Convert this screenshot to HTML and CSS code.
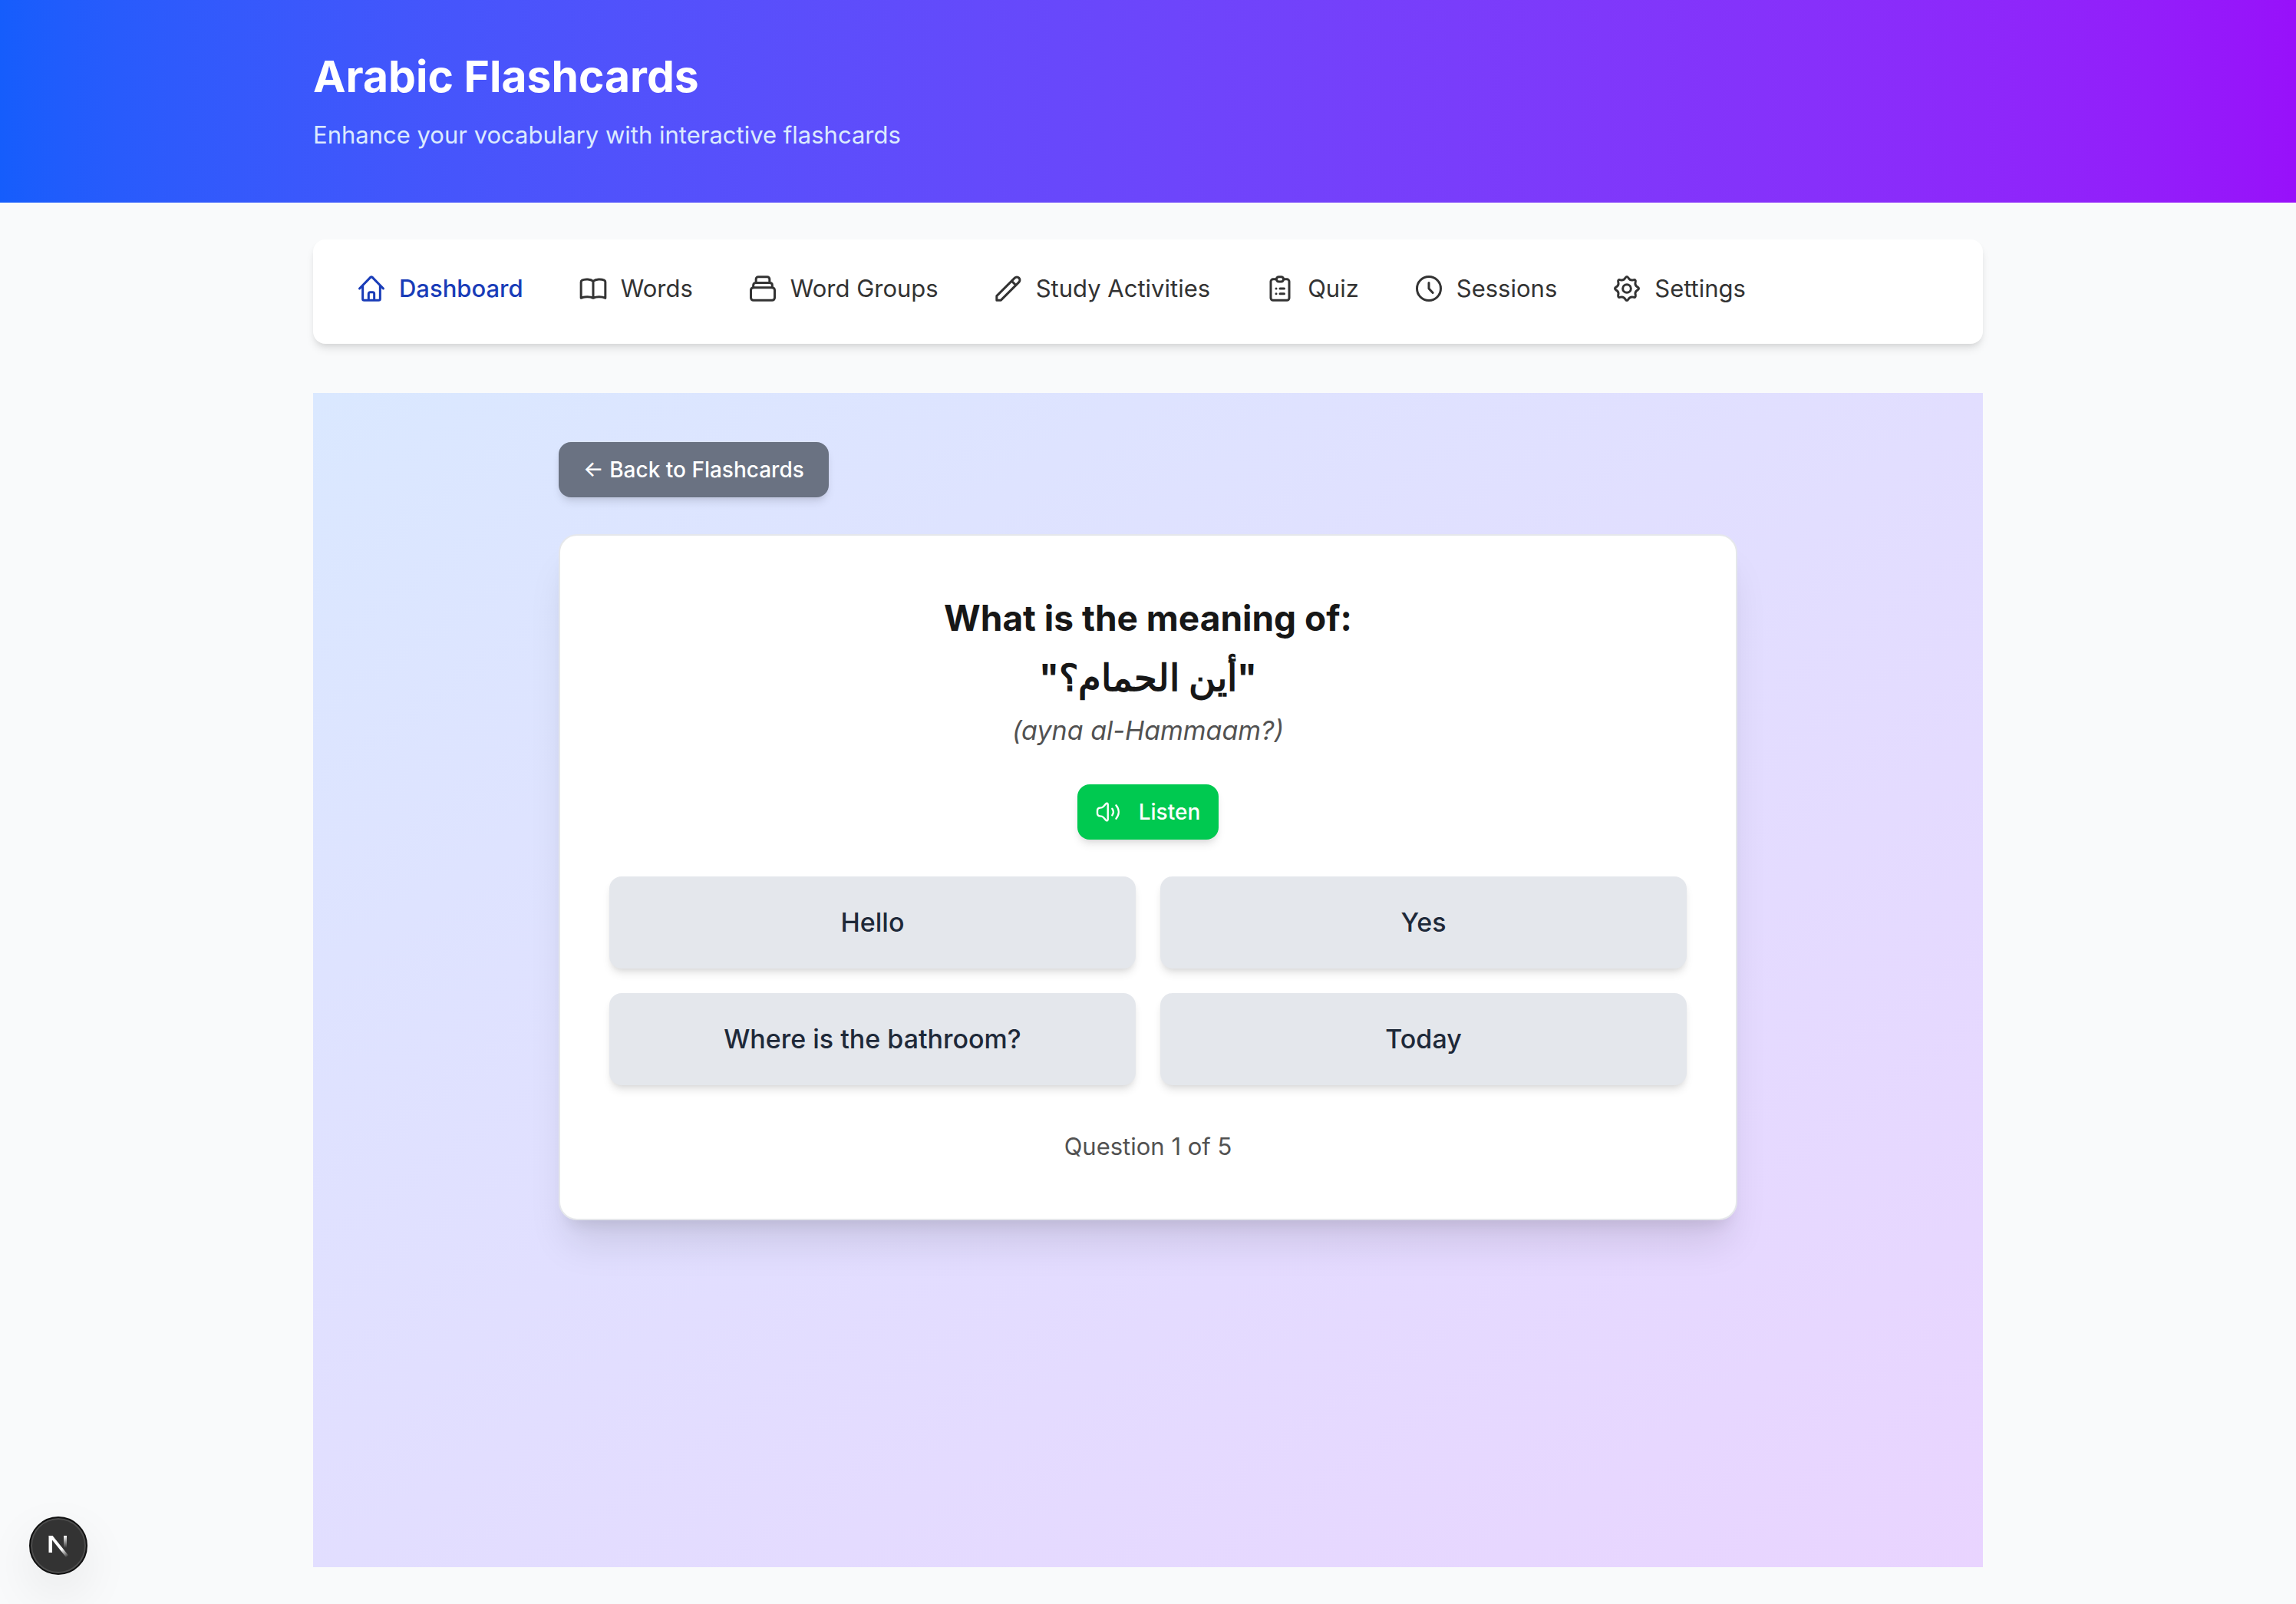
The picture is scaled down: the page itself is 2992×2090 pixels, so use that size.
FILE: index.html
```html
<!DOCTYPE html>
<html lang="en">
<head>
<meta charset="utf-8">
<title>Arabic Flashcards</title>
<meta name="viewport" content="width=device-width, initial-scale=1">
<link rel="stylesheet" href="styles.css">
</head>
<body>
<header class="site-header">
  <div class="container">
    <h1 class="site-title">Arabic Flashcards</h1>
    <p class="site-tagline">Enhance your vocabulary with interactive flashcards</p>
  </div>
</header>

<div class="container page">
  <nav class="nav" aria-label="Main">
    <a class="nav-link is-active" href="#dashboard">
      <svg class="icon" viewBox="0 0 24 24" aria-hidden="true"><path d="M2.7 12L11.400 3.100a.9.9 0 0 1 1.200 0L21.300 12M5.200 9.800v10.300c0 .6.500 1.100 1.100 1.100h11.400c.6 0 1.100-.5 1.100-1.100V9.800M9.800 21v-4.900c0-.7.500-1.200 1.200-1.200h2c.7 0 1.200.5 1.200 1.200V21"/></svg>
      Dashboard
    </a>
    <a class="nav-link" href="#words">
      <svg class="icon" viewBox="0 0 24 24" aria-hidden="true"><path d="M12 6.200C9.800 4.500 5.800 4.400 3.400 5.500c-.6.300-.9.700-.9 1.300v12.600c2.800-1.300 7-1.300 9.500 0 2.500-1.300 6.700-1.300 9.500 0V6.800c0-.6-.3-1-.9-1.300C18.200 4.400 14.200 4.500 12 6.200zM12 6.200v13.200"/></svg>
      Words
    </a>
    <a class="nav-link" href="#groups">
      <svg class="icon" viewBox="0 0 24 24" aria-hidden="true"><rect x="2.700" y="11.200" width="18.600" height="10" rx="2"/><path d="M4.600 11.200V9.400c0-1.100.8-1.900 1.900-1.900h11c1.100 0 1.900.8 1.900 1.900v1.800M6.700 7.500V4.600c0-1 .8-1.800 1.800-1.800h7c1 0 1.800.8 1.800 1.800v2.900"/></svg>
      Word Groups
    </a>
    <a class="nav-link" href="#study">
      <svg class="icon" viewBox="0 0 24 24" aria-hidden="true"><path d="M2.900 17.800L17 3.700a2.330 2.330 0 0 1 3.300 3.300L6.200 21.100H2.900zM14.600 6.100l3.300 3.300"/></svg>
      Study Activities
    </a>
    <a class="nav-link" href="#quiz">
      <svg class="icon" viewBox="0 0 24 24" aria-hidden="true"><path d="M9.200 4.700H6.600c-1 0-1.800.8-1.800 1.800v12.900c0 1 .8 1.800 1.800 1.800h10.800c1 0 1.800-.8 1.800-1.800V6.500c0-1-.8-1.800-1.800-1.800h-2.600M12 16h3.300M12 12h3.300M9 12h.01M9 16h.01"/><rect x="9.200" y="2.800" width="5.600" height="3.800" rx="1.900"/></svg>
      Quiz
    </a>
    <a class="nav-link" href="#sessions">
      <svg class="icon" viewBox="0 0 24 24" aria-hidden="true"><circle cx="12" cy="12" r="9.300"/><path d="M12 7.500V12l3.100 3.300"/></svg>
      Sessions
    </a>
    <a class="nav-link" href="#settings">
      <svg class="icon" viewBox="0 0 24 24" aria-hidden="true"><path d="M20.250 10.750Q22.400 12 20.250 13.250Q18.100 14.500 18.700 16.950Q19.350 19.350 16.950 18.700Q14.500 18.100 13.250 20.250Q12 22.400 10.750 20.250Q9.500 18.100 7.050 18.700Q4.650 19.350 5.300 16.950Q5.900 14.500 3.750 13.250Q1.600 12 3.750 10.750Q5.900 9.500 5.300 7.050Q4.650 4.650 7.050 5.300Q9.500 5.900 10.750 3.750Q12 1.600 13.250 3.750Q14.500 5.900 16.950 5.300Q19.350 4.650 18.700 7.050Q18.100 9.500 20.250 10.750z"/><circle cx="12" cy="12" r="3.200"/></svg>
      Settings
    </a>
  </nav>

  <main class="quiz-panel">
    <div class="quiz">
      <button class="btn btn-back" type="button">← Back to Flashcards</button>
      <section class="card">
        <h2 class="question">What is the meaning of:<br><bdi class="arabic" lang="ar" dir="rtl">"أين الحمام؟"</bdi></h2>
        <p class="translit">(ayna al-Hammaam?)</p>
        <button class="btn btn-listen" type="button">
          <svg class="icon-small" viewBox="0 0 24 24" aria-hidden="true"><path d="M1.500 12v-1.400c0-1.700 1-2.600 2.700-2.600 1.600 0 2.300-.3 3.200-1.300l2.500-2.800c.7-.8 1.900-.4 1.900.7v14.800c0 1.100-1.200 1.500-1.900.7l-2.500-2.800c-.9-1-1.600-1.300-3.200-1.300-1.700 0-2.700-.9-2.700-2.600zM16 8.800c1.500 2 1.500 4.400 0 6.400M19.800 5.500c3.300 4 3.300 9 0 13"/></svg>
          Listen
        </button>
        <div class="answers">
          <button class="answer" type="button">Hello</button>
          <button class="answer" type="button">Yes</button>
          <button class="answer" type="button">Where is the bathroom?</button>
          <button class="answer" type="button">Today</button>
        </div>
        <p class="progress">Question 1 of 5</p>
      </section>
    </div>
  </main>
</div>

<button class="dev-badge" type="button" aria-label="Open Next.js Dev Tools">
  <svg class="dev-logo" viewBox="0 0 40 40" fill="none" aria-hidden="true">
    <defs>
      <linearGradient id="stem-fade" x1="0" y1="7" x2="0" y2="23" gradientUnits="userSpaceOnUse"><stop stop-color="#fff"/><stop offset="1" stop-color="#fff" stop-opacity="0"/></linearGradient>
      <linearGradient id="slash-fade" x1="24" y1="25" x2="32" y2="35" gradientUnits="userSpaceOnUse"><stop stop-color="#fff"/><stop offset="1" stop-color="#fff" stop-opacity="0"/></linearGradient>
    </defs>
    <path fill="#fff" d="M7.500 7h4.500v22H7.500z"/>
    <path fill="url(#stem-fade)" d="M27 7h4v16h-4z"/>
    <path fill="url(#slash-fade)" d="M7.500 7h5L33 32.500 30 35z"/>
  </svg>
</button>
</body>
</html>
```
FILE: styles.css
```css
* { box-sizing: border-box; margin: 0; }

body {
  min-height: 100vh;
  display: flex;
  flex-direction: column;
  background: #f9fafb;
  color: #171717;
  font-family: Inter, "Noto Sans", sans-serif;
  font-size: 31px;
  line-height: 48px;
}

.container {
  width: 100%;
  max-width: 2304px;
  margin: 0 auto;
  padding: 0 64px;
}

.site-header {
  padding: 64px 0;
  background: linear-gradient(to right in oklab, #155dfc, #9810fa);
  color: #fff;
}
.site-title { font-size: 57px; line-height: 72px; }
.site-tagline { margin-top: 16px; color: #dbeafe; }

.page {
  flex: 1;
  display: flex;
  flex-direction: column;
  gap: 64px;
  padding-top: 48px;
  padding-bottom: 48px;
}

.nav {
  display: flex;
  gap: 71px;
  padding: 40px 56px 48px;
  border-radius: 16px;
  background: #fff;
  box-shadow: 0 8px 12px -2px #0000001a, 0 4px 8px -4px #0000001a;
}
.nav-link {
  display: flex;
  align-items: center;
  gap: 16px;
  color: #333;
  text-decoration: none;
}
.nav-link.is-active { color: #193cb8; font-weight: 500; }

.icon, .icon-small {
  flex: none;
  fill: none;
  stroke: currentColor;
  stroke-width: 1.8;
  stroke-linecap: round;
  stroke-linejoin: round;
}
.icon { width: 40px; height: 40px; }
.icon-small { width: 32px; height: 32px; }

.quiz-panel {
  flex: 1;
  padding: 64px;
  background: linear-gradient(to bottom right in oklab, #dae8ff, #e9d4ff);
}
.quiz { max-width: 1536px; margin: 0 auto; }

.btn {
  display: inline-flex;
  align-items: center;
  justify-content: center;
  padding: 16px 32px;
  border: 0;
  border-radius: 16px;
  color: #fff;
  font: 500 28px/40px Inter, sans-serif;
  box-shadow: 0 8px 12px -2px #0000001a, 0 4px 8px -4px #0000001a;
}
.btn-back { margin-bottom: 48px; background: #6a7282; }
.btn-listen { margin: 40px 0 48px; padding: 16px 24px; gap: 24px; background: #00c950; }

.card {
  display: flex;
  flex-direction: column;
  align-items: center;
  padding: 68px 64px 70px;
  border: 2px solid #e5e7eb;
  border-radius: 24px;
  background: #fff;
  text-align: center;
  box-shadow: 0 40px 50px -10px #0000001a, 0 16px 20px -12px #0000001a;
}
.question { font-size: 46px; line-height: 78px; }
.arabic { font-size: 48px; }
.translit { font-size: 34px; line-height: 60px; font-style: italic; color: #525252; }

.answers {
  width: 100%;
  display: grid;
  grid-template-columns: 1fr 1fr;
  gap: 32px;
}
.answer {
  padding: 32px;
  border: 0;
  border-radius: 16px;
  background: #e4e7ec;
  color: #1e2939;
  font: 500 34px/56px Inter, sans-serif;
  box-shadow: 0 8px 12px -2px #0000001a, 0 4px 8px -4px #0000001a;
}
.progress { margin-top: 56px; color: #525252; }

.dev-badge {
  position: fixed;
  left: 38px;
  bottom: 38px;
  display: grid;
  place-items: center;
  width: 76px;
  height: 76px;
  padding: 0;
  border: 2px solid #111;
  border-radius: 50%;
  background: #333;
  box-shadow: inset 0 0 0 2px #4d4d4d, 0 24px 64px 0 #00000014;
}
.dev-logo { width: 40px; height: 40px; }
```
